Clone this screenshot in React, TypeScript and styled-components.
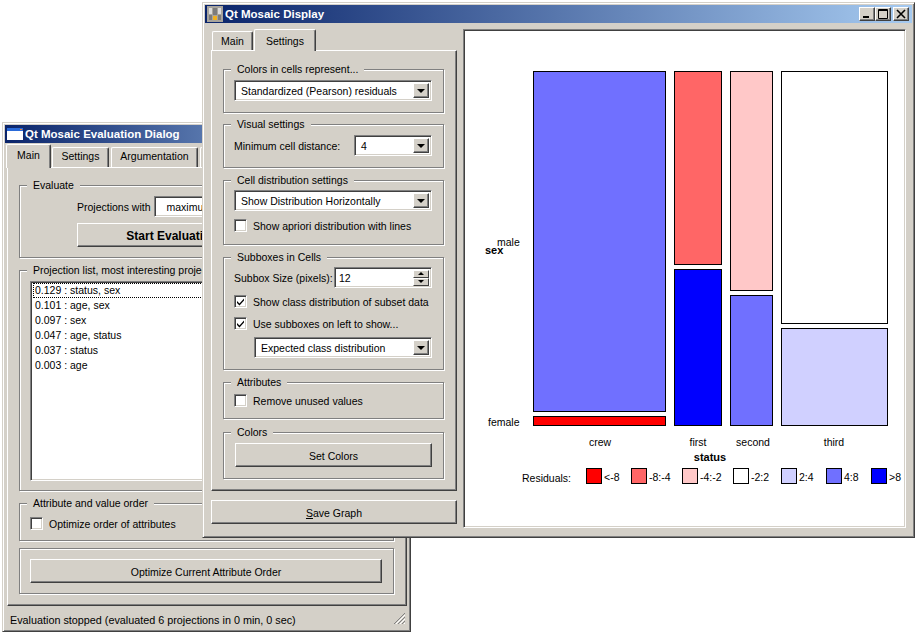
import styled, { createGlobalStyle } from "styled-components";

const face = "#d4d0c8";

const GlobalStyle = createGlobalStyle`
  html, body {
    margin: 0;
    padding: 0;
    background: #fff;
    overflow: hidden;
  }
  body {
    font-family: "Liberation Sans", Arial, sans-serif;
    font-size: 10.5px;
    color: #000;
  }
`;

const Desktop = styled.div`
  position: relative;
  width: 916px;
  height: 633px;
  overflow: hidden;
`;

const Window = styled.div<{ $x: number; $y: number; $w: number; $h: number }>`
  position: absolute;
  isolation: isolate;
  left: ${(p) => p.$x}px;
  top: ${(p) => p.$y}px;
  width: ${(p) => p.$w}px;
  height: ${(p) => p.$h}px;
  box-sizing: border-box;
  padding: 2px;
  display: flex;
  flex-direction: column;
  background: ${face};
  border: 1px solid;
  border-color: ${face} #404040 #404040 ${face};
  box-shadow: inset 1px 1px 0 #fff, inset -1px -1px 0 #808080;
`;

const TitleBar = styled.div`
  height: 18px;
  flex: none;
  display: flex;
  align-items: center;
  padding: 0 3px 0 2px;
  background: linear-gradient(90deg, #0a246a, #a6caf0);
  color: #fff;
  font-weight: 700;
  font-size: 11.5px;
`;

const TitleIcon = styled.svg`
  width: 16px;
  height: 16px;
  flex: none;
  margin-right: 2px;
`;

const TitleText = styled.span`
  flex: 1;
  white-space: nowrap;
`;

const CaptionButton = styled.div<{ $gap?: number }>`
  width: 16px;
  height: 14px;
  box-sizing: border-box;
  margin-left: ${(p) => p.$gap ?? 0}px;
  background: ${face};
  border: 1px solid;
  border-color: #fff #404040 #404040 #fff;
  box-shadow: inset -1px -1px 0 #808080;
  display: flex;
  align-items: center;
  justify-content: center;
`;

const Body = styled.div`
  flex: 1;
  display: flex;
  gap: 6px;
  padding: 6px 6px 7px;
  min-height: 0;
`;

const LeftColumn = styled.div`
  width: 246px;
  flex: none;
  display: flex;
  flex-direction: column;
  padding-bottom: 4px;
`;

const TabRow = styled.div<{ $h: number }>`
  height: ${(p) => p.$h}px;
  flex: none;
  display: flex;
  align-items: flex-end;
  position: relative;
  z-index: 1;
`;

const Tab = styled.div<{
  $w: number;
  $h: number;
  $active?: boolean;
  $ml?: number;
  $pb?: number;
}>`
  width: ${(p) => p.$w}px;
  height: ${(p) => p.$h}px;
  margin-left: ${(p) => p.$ml ?? 0}px;
  margin-bottom: ${(p) => (p.$active ? -1 : 0)}px;
  padding-bottom: ${(p) => p.$pb ?? 0}px;
  box-sizing: border-box;
  flex: none;
  display: flex;
  align-items: center;
  justify-content: center;
  background: ${face};
  border: 1px solid;
  border-color: #fff #404040 ${face} #fff;
  border-bottom-width: 0;
  border-radius: 2px 2px 0 0;
  box-shadow: inset -1px 0 0 #808080;
  white-space: nowrap;
`;

const Pane = styled.div<{ $pt: number }>`
  flex: 1;
  box-sizing: border-box;
  padding: ${(p) => p.$pt}px 12px 0 11px;
  display: flex;
  flex-direction: column;
  min-height: 0;
  background: ${face};
  border: 1px solid;
  border-color: #fff #404040 #404040 #fff;
  box-shadow: inset -1px -1px 0 #808080;
`;

const Group = styled.section<{ $h: number; $mt?: number; $pt: number }>`
  position: relative;
  flex: none;
  height: ${(p) => p.$h}px;
  margin-top: ${(p) => p.$mt ?? 0}px;
  box-sizing: border-box;
  padding: ${(p) => p.$pt}px 11px 0 10px;
  display: flex;
  flex-direction: column;
  border: 1px solid #808080;
  box-shadow: inset 1px 1px 0 #fff, 1px 1px 0 #fff;
`;

const GroupLabel = styled.span`
  position: absolute;
  top: -8px;
  left: 7px;
  padding: 0 6px;
  background: ${face};
  white-space: nowrap;
  line-height: 14px;
`;

const Field = styled.div<{ $w?: number; $mt?: number; $ml?: number; $pl?: number }>`
  height: 21px;
  flex: none;
  width: ${(p) => (p.$w ? `${p.$w}px` : "auto")};
  margin-top: ${(p) => p.$mt ?? 0}px;
  margin-left: ${(p) => p.$ml ?? 0}px;
  box-sizing: border-box;
  display: flex;
  align-items: center;
  justify-content: space-between;
  padding: 2px 2px 2px ${(p) => p.$pl ?? 6}px;
  background: #fff;
  border: 1px solid;
  border-color: #808080 #fff #fff #808080;
  box-shadow: inset 1px 1px 0 #404040, inset -1px -1px 0 ${face};
  white-space: nowrap;
  overflow: hidden;
`;

const FieldRow = styled.div`
  display: flex;
  align-items: center;
  justify-content: space-between;
  white-space: nowrap;
`;

const DropButton = styled.div`
  width: 16px;
  height: 15px;
  flex: none;
  box-sizing: border-box;
  background: ${face};
  border: 1px solid;
  border-color: #fff #404040 #404040 #fff;
  box-shadow: inset -1px -1px 0 #808080;
  display: flex;
  align-items: center;
  justify-content: center;
  &::after {
    content: "";
    border-style: solid;
    border-width: 4px 4px 0;
    border-color: #000 transparent transparent;
  }
`;

const SpinColumn = styled.div`
  width: 16px;
  height: 16px;
  flex: none;
  display: flex;
  flex-direction: column;
`;

const SpinButton = styled.div<{ $up?: boolean }>`
  flex: 1;
  box-sizing: border-box;
  background: ${face};
  border: 1px solid;
  border-color: #fff #404040 #404040 #fff;
  display: flex;
  align-items: center;
  justify-content: center;
  &::after {
    content: "";
    border-style: solid;
    border-width: ${(p) => (p.$up ? "0 3px 3px" : "3px 3px 0")};
    border-color: ${(p) =>
      p.$up
        ? "transparent transparent #000"
        : "#000 transparent transparent"};
  }
`;

const CheckRow = styled.label<{ $mt?: number }>`
  height: 13px;
  display: flex;
  align-items: center;
  gap: 6px;
  margin-top: ${(p) => p.$mt ?? 0}px;
  white-space: nowrap;
`;

const CheckBox = styled.span`
  width: 13px;
  height: 13px;
  flex: none;
  box-sizing: border-box;
  background: #fff;
  border: 1px solid;
  border-color: #808080 #fff #fff #808080;
  box-shadow: inset 1px 1px 0 #404040, inset -1px -1px 0 ${face};
  display: flex;
  align-items: center;
  justify-content: center;
`;

const PushButton = styled.div<{
  $h: number;
  $w?: number;
  $mt?: number;
  $ml?: number;
  $bold?: boolean;
}>`
  height: ${(p) => p.$h}px;
  width: ${(p) => (p.$w ? `${p.$w}px` : "auto")};
  flex: none;
  margin-top: ${(p) => p.$mt ?? 0}px;
  margin-left: ${(p) => p.$ml ?? 0}px;
  padding-top: 1px;
  box-sizing: border-box;
  background: ${face};
  border: 1px solid;
  border-color: #fff #404040 #404040 #fff;
  box-shadow: inset -1px -1px 0 #808080;
  display: flex;
  align-items: center;
  justify-content: center;
  font-weight: ${(p) => (p.$bold ? 700 : 400)};
  font-size: ${(p) => (p.$bold ? 12 : 10.5)}px;
  white-space: nowrap;
`;

const Canvas = styled.div`
  flex: 1;
  min-width: 0;
  box-sizing: border-box;
  background: #fff;
  border: 1px solid;
  border-color: #808080 #fff #fff #808080;
  box-shadow: inset 1px 1px 0 #404040, inset -1px -1px 0 ${face};
`;

const ChartSvg = styled.svg`
  display: block;
  width: 100%;
  height: 100%;
`;

const ChartText = styled.text<{ $bold?: boolean }>`
  font-family: "Liberation Sans", Arial, sans-serif;
  font-size: ${(p) => (p.$bold ? 11 : 10.5)}px;
  font-weight: ${(p) => (p.$bold ? 700 : 400)};
  fill: #000;
`;

const EvalBody = styled.div`
  flex: 1;
  display: flex;
  flex-direction: column;
  padding: 1px 1px 0 2px;
  min-height: 0;
`;

const ProjectionRow = styled.div`
  display: flex;
  align-items: center;
  gap: 3px;
  padding-left: 47px;
  white-space: nowrap;
`;

const ListBox = styled.div`
  height: 200px;
  flex: none;
  box-sizing: border-box;
  padding: 1px 2px;
  background: #fff;
  border: 1px solid;
  border-color: #808080 #fff #fff #808080;
  box-shadow: inset 1px 1px 0 #404040, inset -1px -1px 0 ${face};
`;

const ListRow = styled.div<{ $focus?: boolean }>`
  height: 15px;
  line-height: 13px;
  box-sizing: border-box;
  padding-left: 1px;
  border: 1px dotted ${(p) => (p.$focus ? "#000" : "transparent")};
`;

const StatusBar = styled.div`
  height: 23px;
  flex: none;
  box-sizing: border-box;
  display: flex;
  align-items: center;
  justify-content: space-between;
  padding: 4px 2px 0 5px;
  font-size: 10.8px;
  white-space: nowrap;
`;

const SizeGrip = styled.svg`
  width: 13px;
  height: 13px;
  flex: none;
  margin-top: -3px;
`;

const cells = [
  { x: 533, y: 71, w: 133, h: 341, fill: "#7070ff" },
  { x: 533, y: 416, w: 133, h: 10, fill: "#ff0000" },
  { x: 674, y: 71, w: 48, h: 194, fill: "#ff6666" },
  { x: 674, y: 269, w: 48, h: 157, fill: "#0000ff" },
  { x: 730, y: 71, w: 43, h: 220, fill: "#ffc8c8" },
  { x: 730, y: 295, w: 43, h: 131, fill: "#7070ff" },
  { x: 781, y: 71, w: 107, h: 253, fill: "#ffffff" },
  { x: 781, y: 328, w: 107, h: 98, fill: "#d0d0ff" },
];

const columnLabels = [
  { x: 600, text: "crew" },
  { x: 698, text: "first" },
  { x: 753, text: "second" },
  { x: 834, text: "third" },
];

const legend = [
  { x: 586, fill: "#ff0000", text: "<-8" },
  { x: 631, fill: "#ff6666", text: "-8:-4" },
  { x: 682, fill: "#ffc8c8", text: "-4:-2" },
  { x: 733, fill: "#ffffff", text: "-2:2" },
  { x: 781, fill: "#d0d0ff", text: "2:4" },
  { x: 826, fill: "#7070ff", text: "4:8" },
  { x: 871, fill: "#0000ff", text: ">8" },
];

const projections = [
  "0.129 : status, sex",
  "0.101 : age, sex",
  "0.097 : sex",
  "0.047 : age, status",
  "0.037 : status",
  "0.003 : age",
];

function Check({ on }: { on?: boolean }) {
  return (
    <CheckBox>
      {on ? (
        <svg width="9" height="9" viewBox="0 0 9 9">
          <path d="M1 4 L3.5 6.5 L8 1.5 L8 3.5 L3.5 8.5 L1 6 Z" fill="#000" />
        </svg>
      ) : null}
    </CheckBox>
  );
}

function Combo({
  text,
  w,
  mt,
  ml,
}: {
  text: string;
  w?: number;
  mt?: number;
  ml?: number;
}) {
  return (
    <Field $w={w} $mt={mt} $ml={ml}>
      {text}
      <DropButton />
    </Field>
  );
}

function Caption() {
  return (
    <>
      <CaptionButton>
        <svg width="10" height="10" viewBox="0 0 10 10">
          <rect x="1" y="7" width="6" height="2" fill="#000" />
        </svg>
      </CaptionButton>
      <CaptionButton>
        <svg width="10" height="10" viewBox="0 0 10 10">
          <path d="M0.5 0.5 H9.5 V9.5 H0.5 Z M0 1.5 H10" fill="none" stroke="#000" />
        </svg>
      </CaptionButton>
      <CaptionButton $gap={2}>
        <svg width="10" height="10" viewBox="0 0 10 10">
          <path d="M1 1 L9 9 M9 1 L1 9" fill="none" stroke="#000" strokeWidth="1.6" />
        </svg>
      </CaptionButton>
    </>
  );
}

function EvaluationDialog() {
  return (
    <Window $x={2} $y={122} $w={409} $h={510}>
      <TitleBar>
        <TitleIcon viewBox="0 0 16 16">
          <rect x="0" y="2" width="16" height="12" fill="#fff" />
          <rect x="0" y="2" width="16" height="3" fill="#2a6ad8" />
          <rect x="13" y="3" width="2" height="1" fill="#f08030" />
        </TitleIcon>
        <TitleText>Qt Mosaic Evaluation Dialog</TitleText>
      </TitleBar>
      <EvalBody>
        <TabRow $h={23}>
          <Tab $active $w={45} $h={24} $ml={-1} $pb={4}>
            Main
          </Tab>
          <Tab $w={57} $h={20} $ml={1} $pb={3}>
            Settings
          </Tab>
          <Tab $w={87} $h={20} $ml={2} $pb={3}>
            Argumentation
          </Tab>
          <Tab $w={60} $h={20} $ml={2} />
        </TabRow>
        <Pane $pt={17}>
          <Group $h={73} $pt={10}>
            <GroupLabel>Evaluate</GroupLabel>
            <ProjectionRow>
              Projections with
              <Field $w={200} $pl={12}>
                maximum value
              </Field>
            </ProjectionRow>
            <PushButton $h={24} $w={190} $mt={6} $ml={47} $bold>
              Start Evaluation
            </PushButton>
          </Group>
          <Group $h={221} $mt={12} $pt={10}>
            <GroupLabel>Projection list, most interesting projections</GroupLabel>
            <ListBox>
              {projections.map((row, i) => (
                <ListRow key={row} $focus={i === 0}>
                  {row}
                </ListRow>
              ))}
            </ListBox>
          </Group>
          <Group $h={38} $mt={12} $pt={13}>
            <GroupLabel>Attribute and value order</GroupLabel>
            <CheckRow>
              <Check />
              Optimize order of attributes
            </CheckRow>
          </Group>
          <Group $h={46} $mt={7} $pt={10}>
            <PushButton $h={24}>Optimize Current Attribute Order</PushButton>
          </Group>
        </Pane>
      </EvalBody>
      <StatusBar>
        Evaluation stopped (evaluated 6 projections in 0 min, 0 sec)
        <SizeGrip viewBox="0 0 13 13">
          <path d="M12 1 L1 12 M12 5 L5 12 M12 9 L9 12" stroke="#808080" fill="none" />
          <path d="M12 3 L3 12 M12 7 L7 12 M12 11 L11 12" stroke="#fff" fill="none" />
        </SizeGrip>
      </StatusBar>
    </Window>
  );
}

function MosaicDisplay() {
  return (
    <Window $x={202} $y={2} $w={713} $h={536}>
      <TitleBar>
        <TitleIcon viewBox="0 0 16 16">
          <rect width="16" height="16" fill="#a8a49c" />
          <rect x="2" y="2" width="3" height="6" fill="#dcdcdc" />
          <rect x="6" y="2" width="4" height="7" fill="#7c7c7c" />
          <rect x="11" y="2" width="3" height="6" fill="#dcdcdc" />
          <rect x="2" y="9" width="3" height="5" fill="#7c7c7c" />
          <rect x="6" y="10" width="4" height="4" fill="#f0b020" />
          <rect x="11" y="9" width="3" height="5" fill="#7c7c7c" />
        </TitleIcon>
        <TitleText>Qt Mosaic Display</TitleText>
        <Caption />
      </TitleBar>
      <Body>
        <LeftColumn>
          <TabRow $h={21}>
            <Tab $w={41} $h={19} $ml={1}>
              Main
            </Tab>
            <Tab $active $w={62} $h={22} $ml={1}>
              Settings
            </Tab>
          </TabRow>
          <Pane $pt={18}>
            <Group $h={44} $pt={10}>
              <GroupLabel>Colors in cells represent...</GroupLabel>
              <Combo text="Standardized (Pearson) residuals" />
            </Group>
            <Group $h={44} $mt={11} $pt={10}>
              <GroupLabel>Visual settings</GroupLabel>
              <FieldRow>
                Minimum cell distance:
                <Combo text="4" w={78} />
              </FieldRow>
            </Group>
            <Group $h={65} $mt={12} $pt={9}>
              <GroupLabel>Cell distribution settings</GroupLabel>
              <Combo text="Show Distribution Horizontally" />
              <CheckRow $mt={8}>
                <Check />
                Show apriori distribution with lines
              </CheckRow>
            </Group>
            <Group $h={113} $mt={12} $pt={9}>
              <GroupLabel>Subboxes in Cells</GroupLabel>
              <FieldRow>
                Subbox Size (pixels):
                <Field $w={98} $pl={4}>
                  12
                  <SpinColumn>
                    <SpinButton $up />
                    <SpinButton />
                  </SpinColumn>
                </Field>
              </FieldRow>
              <CheckRow $mt={7}>
                <Check on />
                Show class distribution of subset data
              </CheckRow>
              <CheckRow $mt={9}>
                <Check on />
                Use subboxes on left to show...
              </CheckRow>
              <Combo text="Expected class distribution" mt={7} ml={20} />
            </Group>
            <Group $h={37} $mt={12} $pt={11}>
              <GroupLabel>Attributes</GroupLabel>
              <CheckRow>
                <Check />
                Remove unused values
              </CheckRow>
            </Group>
            <Group $h={47} $mt={13} $pt={10}>
              <GroupLabel>Colors</GroupLabel>
              <PushButton $h={24} $ml={1}>
                Set Colors
              </PushButton>
            </Group>
          </Pane>
          <PushButton $h={24} $mt={9}>
            <span>
              <u>S</u>ave Graph
            </span>
          </PushButton>
        </LeftColumn>
        <Canvas>
          <ChartSvg viewBox="464 30 441 497" shapeRendering="crispEdges">
            {cells.map((c) => (
              <rect
                key={`${c.x}-${c.y}`}
                x={c.x + 0.5}
                y={c.y + 0.5}
                width={c.w - 1}
                height={c.h - 1}
                fill={c.fill}
                stroke="#000"
              />
            ))}
            <ChartText x={497} y={246}>
              male
            </ChartText>
            <ChartText $bold x={485} y={254}>
              sex
            </ChartText>
            <ChartText x={488} y={426}>
              female
            </ChartText>
            {columnLabels.map((l) => (
              <ChartText key={l.text} x={l.x} y={446} textAnchor="middle">
                {l.text}
              </ChartText>
            ))}
            <ChartText $bold x={710} y={461} textAnchor="middle">
              status
            </ChartText>
            <ChartText x={522} y={482}>
              Residuals:
            </ChartText>
            {legend.map((l) => (
              <g key={l.text}>
                <rect
                  x={l.x + 0.5}
                  y={468.5}
                  width={15}
                  height={15}
                  fill={l.fill}
                  stroke="#000"
                />
                <ChartText x={l.x + 18} y={481}>
                  {l.text}
                </ChartText>
              </g>
            ))}
          </ChartSvg>
        </Canvas>
      </Body>
    </Window>
  );
}

export default function App() {
  return (
    <Desktop>
      <GlobalStyle />
      <EvaluationDialog />
      <MosaicDisplay />
    </Desktop>
  );
}
